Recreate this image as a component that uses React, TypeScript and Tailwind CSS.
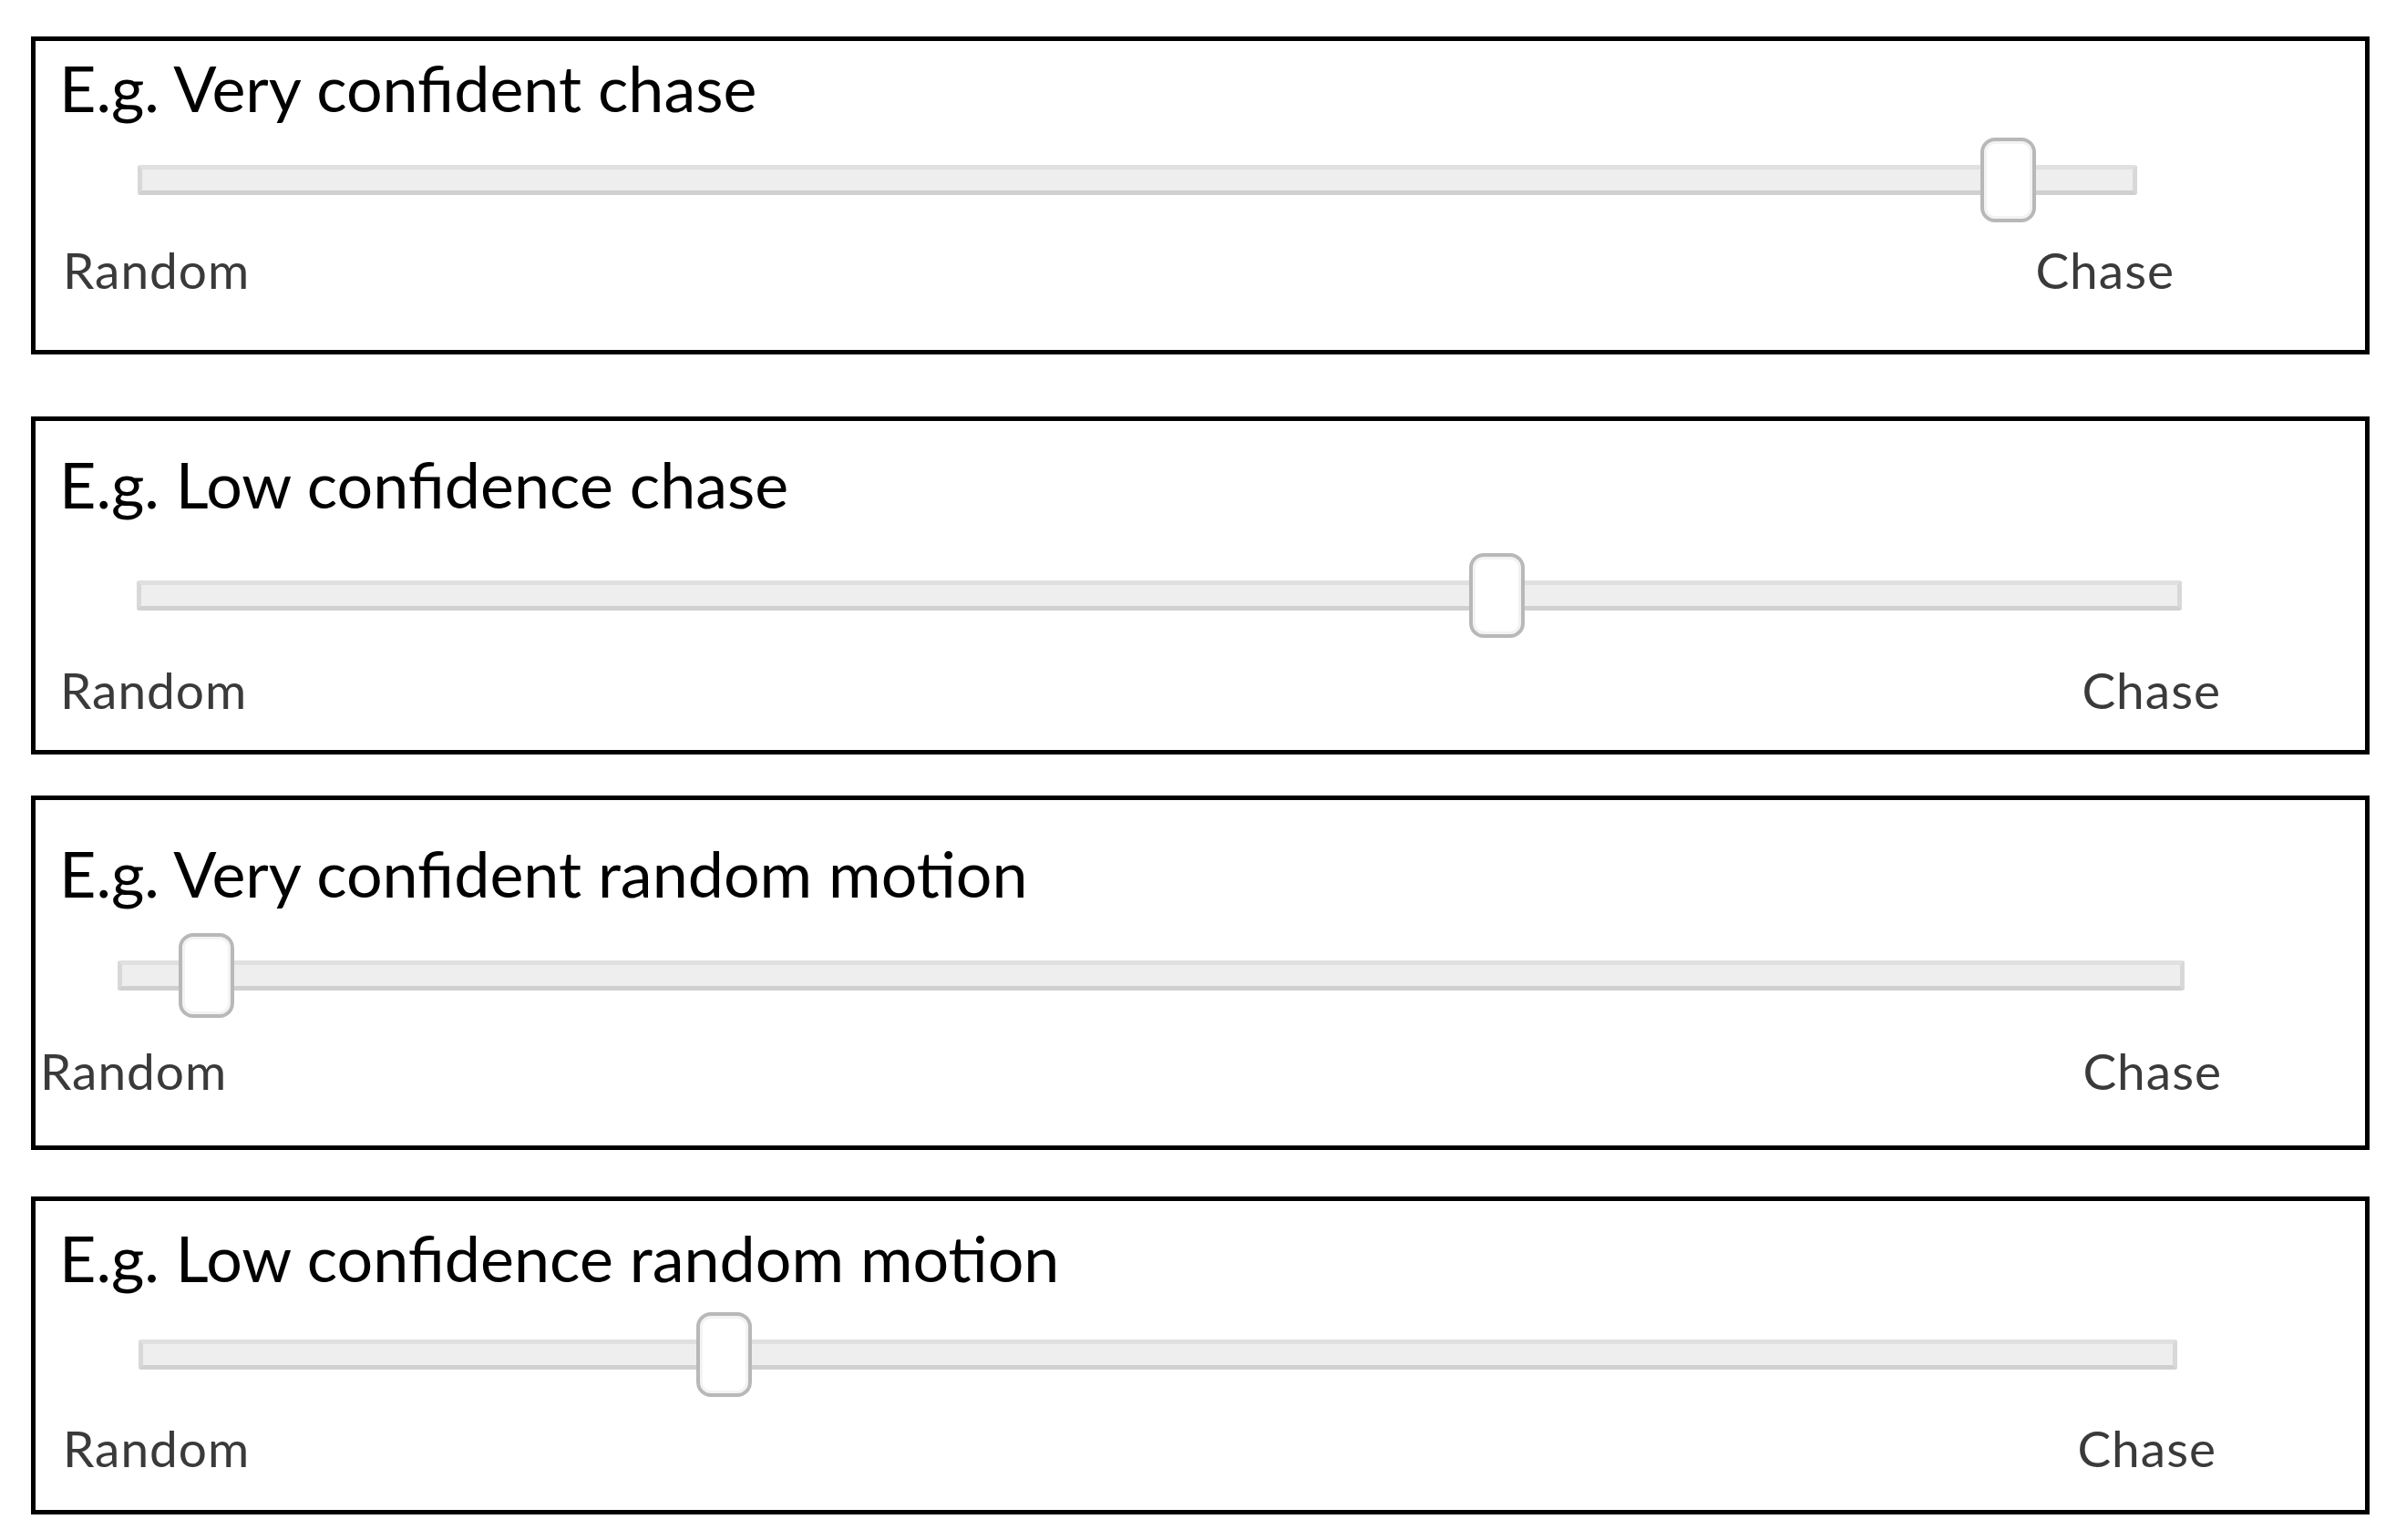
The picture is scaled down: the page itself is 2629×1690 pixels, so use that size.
import React from 'react'

type Example = {
  title: string
  value: number
  box: string
  titleCls: string
  sliderCls: string
  labelCls: string
}

// Each panel is a cropped screenshot, so spacing differs a little per panel
const examples: Example[] = [
  {
    title: 'E.g. Very confident chase',
    value: 0.9355,
    box: 'mt-0',
    titleCls: 'mt-[16px] ml-[26px]',
    sliderCls: 'mt-[20px] ml-[112px] w-[2194px]',
    labelCls: 'mt-[25px] ml-[30px] mr-[209px] mb-[60px]',
  },
  {
    title: 'E.g. Low confidence chase',
    value: 0.6651,
    box: 'mt-[68px]',
    titleCls: 'mt-[34px] ml-[26px]',
    sliderCls: 'mt-[41px] ml-[111px] w-[2244px]',
    labelCls: 'mt-[30px] ml-[27px] mr-[158px] mb-[38px]',
  },
  {
    title: 'E.g. Very confident random motion',
    value: 0.04255,
    box: 'mt-[45px]',
    titleCls: 'mt-[45px] ml-[26px]',
    sliderCls: 'mt-[31px] ml-[90px] w-[2268px]',
    labelCls: 'mt-[31px] ml-[5px] mr-[157px] mb-[54px]',
  },
  {
    title: 'E.g. Low confidence random motion',
    value: 0.2868,
    box: 'mt-[51px]',
    titleCls: 'mt-[27px] ml-[26px]',
    sliderCls: 'mt-[25px] ml-[113px] w-[2237px]',
    labelCls: 'mt-[29px] ml-[30px] mr-[163px] mb-[40px]',
  },
]

function Slider({ value, className }: { value: number; className: string }) {
  return (
    <div className={`relative flex h-[93px] items-center ${className}`}>
      <div className="h-[33px] w-full rounded-[3px] border-[5px] border-[#d8d8d8] border-t-[#e0e0e0] border-b-[#d0d0d0] bg-[#eeeeee]" />
      <div
        className="absolute top-0 h-[93px] w-[61px] rounded-[16px] border-[4px] border-[#b8b8b8] bg-white shadow-[inset_0_0_0_3px_#f3f3f3]"
        style={{ left: `calc(${value * 100}% - 30px)` }}
      />
    </div>
  )
}

export default function App() {
  return (
    <div className="min-h-screen bg-white pt-[40px] font-['Lato',sans-serif]">
      {examples.map((ex) => (
        <div
          key={ex.title}
          className={`ml-[34px] w-[2566px] border-[5px] border-black bg-white ${ex.box}`}
        >
          <div className={`text-[70px] leading-[70px] text-black ${ex.titleCls}`}>
            {ex.title}
          </div>
          <Slider value={ex.value} className={ex.sliderCls} />
          <div
            className={`flex justify-between text-[55px] leading-[55px] tracking-[1px] text-[#3a3a3a] ${ex.labelCls}`}
          >
            <span>Random</span>
            <span>Chase</span>
          </div>
        </div>
      ))}
    </div>
  )
}
